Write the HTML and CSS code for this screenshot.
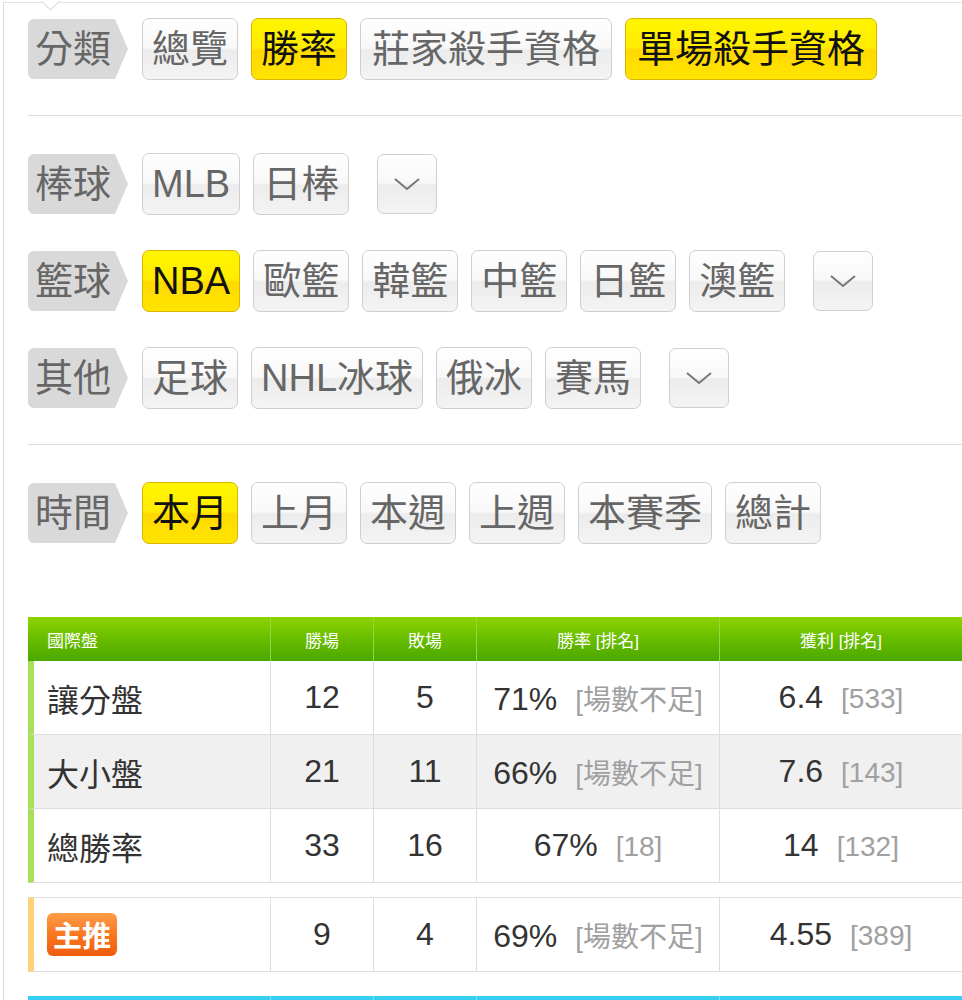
FILE: index.html
```html
<!DOCTYPE html>
<html lang="zh-Hant">
<head>
<meta charset="utf-8">
<link rel="stylesheet" href="styles.css">
</head>
<body>
<div class="panel">
  <span class="notch"></span>

  <div class="row first">
    <div class="label">分類</div>
    <div class="btn">總覽</div>
    <div class="btn on">勝率</div>
    <div class="btn wide">莊家殺手資格</div>
    <div class="btn on wide">單場殺手資格</div>
  </div>

  <hr class="divider">

  <div class="group">
    <div class="row">
      <div class="label">棒球</div>
      <div class="btn">MLB</div>
      <div class="btn">日棒</div>
      <div class="btn drop"><svg width="28" height="14" viewBox="0 0 28 14"><path d="M2 2 L14 12 L26 2" fill="none" stroke="#777" stroke-width="2"/></svg></div>
    </div>
    <div class="row">
      <div class="label">籃球</div>
      <div class="btn on">NBA</div>
      <div class="btn">歐籃</div>
      <div class="btn">韓籃</div>
      <div class="btn">中籃</div>
      <div class="btn">日籃</div>
      <div class="btn">澳籃</div>
      <div class="btn drop"><svg width="28" height="14" viewBox="0 0 28 14"><path d="M2 2 L14 12 L26 2" fill="none" stroke="#777" stroke-width="2"/></svg></div>
    </div>
    <div class="row">
      <div class="label">其他</div>
      <div class="btn">足球</div>
      <div class="btn">NHL冰球</div>
      <div class="btn">俄冰</div>
      <div class="btn">賽馬</div>
      <div class="btn drop"><svg width="28" height="14" viewBox="0 0 28 14"><path d="M2 2 L14 12 L26 2" fill="none" stroke="#777" stroke-width="2"/></svg></div>
    </div>
  </div>

  <hr class="divider">

  <div class="row">
    <div class="label">時間</div>
    <div class="btn on">本月</div>
    <div class="btn">上月</div>
    <div class="btn">本週</div>
    <div class="btn">上週</div>
    <div class="btn">本賽季</div>
    <div class="btn">總計</div>
  </div>

  <table class="stats">
    <colgroup>
      <col class="c1"><col class="c2"><col class="c3"><col class="c4"><col class="c5">
    </colgroup>
    <thead>
      <tr><th class="name">國際盤</th><th>勝場</th><th>敗場</th><th>勝率 [排名]</th><th>獲利 [排名]</th></tr>
    </thead>
    <tbody>
      <tr><td class="name">讓分盤</td><td>12</td><td>5</td><td>71%<span class="rk">[場數不足]</span></td><td>6.4<span class="rk">[533]</span></td></tr>
      <tr class="alt"><td class="name">大小盤</td><td>21</td><td>11</td><td>66%<span class="rk">[場數不足]</span></td><td>7.6<span class="rk">[143]</span></td></tr>
      <tr><td class="name">總勝率</td><td>33</td><td>16</td><td>67%<span class="rk">[18]</span></td><td>14<span class="rk">[132]</span></td></tr>
    </tbody>
  </table>

  <table class="stats main">
    <colgroup>
      <col class="c1"><col class="c2"><col class="c3"><col class="c4"><col class="c5">
    </colgroup>
    <tbody>
      <tr><td class="name"><span class="badge">主推</span></td><td>9</td><td>4</td><td>69%<span class="rk">[場數不足]</span></td><td>4.55<span class="rk">[389]</span></td></tr>
    </tbody>
  </table>

  <table class="stats blue">
    <colgroup>
      <col class="c1"><col class="c2"><col class="c3"><col class="c4"><col class="c5">
    </colgroup>
    <thead>
      <tr><th class="name">&nbsp;</th><th>&nbsp;</th><th>&nbsp;</th><th>&nbsp;</th><th>&nbsp;</th></tr>
    </thead>
  </table>
</div>
</body>
</html>
```

FILE: styles.css
```css
html, body {
  margin: 0;
  padding: 0;
  background: #fff;
  overflow: hidden;
}

body {
  font-family: "Liberation Sans", "Noto Sans CJK TC", sans-serif;
  color: #333;
}

.panel {
  position: relative;
  margin-left: 3px;
  margin-top: 2px;
  border-left: 1px solid #d8d8d8;
  border-top: 1px solid #e2e2e2;
  padding: 15px 0 0 24px;
  min-height: 1100px;
}

.notch {
  position: absolute;
  left: 40px;
  top: -8px;
  width: 12px;
  height: 12px;
  background: #fff;
  border-right: 1px solid #ddd;
  border-bottom: 1px solid #ddd;
  transform: rotate(45deg);
}

.row {
  display: flex;
  align-items: center;
  gap: 13px;
  height: 62px;
}

.group {
  display: flex;
  flex-direction: column;
  gap: 35px;
}

.divider {
  border: 0;
  border-top: 1px solid #dcdcdc;
  margin: 35px 0 37px 0;
}

.label {
  position: relative;
  height: 60px;
  width: 87px;
  margin-right: 14px;
  background: #d9d9d9;
  border-radius: 6px 0 0 6px;
  color: #666;
  font-size: 38px;
  line-height: 60px;
  padding-left: 7px;
  box-sizing: border-box;
  white-space: nowrap;
}

.label::after {
  content: "";
  position: absolute;
  right: -13px;
  top: 0;
  border-top: 30px solid transparent;
  border-bottom: 30px solid transparent;
  border-left: 13px solid #d9d9d9;
}

.btn {
  height: 62px;
  box-sizing: border-box;
  padding: 0 9px;
  border: 1px solid #cfcfcf;
  border-radius: 7px;
  background: linear-gradient(#ffffff 0%, #f8f8f8 48%, #ececec 52%, #f4f4f4 100%);
  color: #666;
  font-size: 38px;
  line-height: 60px;
  white-space: nowrap;
}

.btn.wide {
  padding: 0 11px;
}

.btn.on {
  background: linear-gradient(#fff500 0%, #ffec00 48%, #ffd900 52%, #ffe400 100%);
  border-color: #d9b400;
  color: #111;
}

.btn.drop {
  width: 60px;
  height: 60px;
  padding: 0;
  margin-left: 15px;
  display: flex;
  align-items: center;
  justify-content: center;
}

.stats {
  width: 934px;
  border-collapse: separate;
  border-spacing: 0;
  table-layout: fixed;
  margin-top: 73px;
}

.stats .c1 { width: 242px; }
.stats .c2 { width: 103px; }
.stats .c3 { width: 103px; }
.stats .c4 { width: 243px; }
.stats .c5 { width: 243px; }

.stats th {
  height: 44px;
  padding: 0;
  background: linear-gradient(#8fd300 0%, #6cbf00 45%, #4aa800 100%);
  color: #fff;
  font-weight: normal;
  font-size: 17px;
  text-align: center;
  border-left: 1px solid #92d64a;
}

.stats th.name {
  text-align: left;
  padding-left: 19px;
  border-left: 0;
}

.stats td {
  height: 73px;
  padding: 0;
  text-align: center;
  font-size: 32px;
  color: #333;
  border-left: 1px solid #dedede;
  border-bottom: 1px solid #dedede;
  background: #fff;
  white-space: nowrap;
}

.stats td.name {
  text-align: left;
  padding-left: 13px;
  border-left: 6px solid #a8e05c;
}

.stats tr.alt td {
  background: #f0f0f0;
}

.rk {
  font-size: 28px;
  color: #a0a0a0;
  margin-left: 18px;
}

.stats.main {
  margin-top: 14px;
}

.stats.main td {
  height: 73px;
  border-top: 1px solid #dedede;
}

.stats.main td.name {
  border-left-color: #ffd27a;
}

.badge {
  display: inline-block;
  width: 70px;
  height: 43px;
  line-height: 43px;
  text-align: center;
  border-radius: 6px;
  background: linear-gradient(#ff9c48 0%, #f7741c 55%, #ee5c10 100%);
  color: #fff;
  font-weight: bold;
  font-size: 29px;
  font-family: "Noto Sans CJK TC", sans-serif;
  vertical-align: middle;
}

.stats.blue {
  margin-top: 24px;
}

.stats.blue th {
  background: linear-gradient(#37d0f4, #1fb8e8);
  border-left-color: #7fe0f8;
}
```
